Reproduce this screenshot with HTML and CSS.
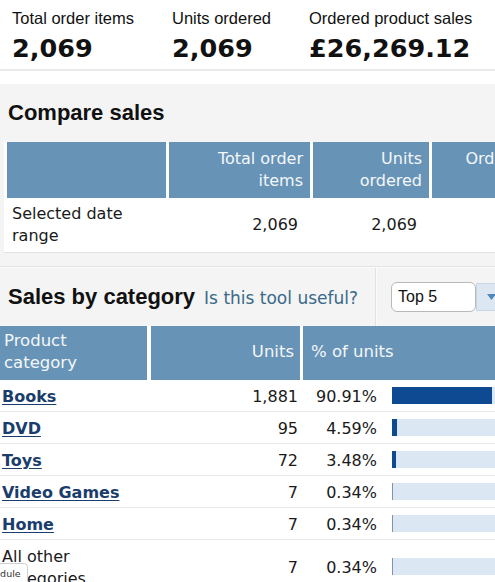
FILE: index.html
```html
<!DOCTYPE html>
<html lang="en">
<head>
    <meta charset="UTF-8">
    <meta name="viewport" content="width=device-width, initial-scale=1.0">
    <title>Sales Dashboard</title>
    <link rel="stylesheet" href="styles.css">
</head>
<body>
    <div class="summary">
        <div class="metric">
            <div class="metric-label">Total order items</div>
            <div class="metric-value">2,069</div>
        </div>
        <div class="metric">
            <div class="metric-label">Units ordered</div>
            <div class="metric-value">2,069</div>
        </div>
        <div class="metric">
            <div class="metric-label">Ordered product sales</div>
            <div class="metric-value">£26,269.12</div>
        </div>
    </div>

    <div class="panel compare">
        <h2 class="panel-title">Compare sales</h2>
        <table class="compare-table">
            <colgroup>
                <col class="c-name">
                <col class="c-items">
                <col class="c-units">
                <col class="c-sales">
            </colgroup>
            <thead>
                <tr>
                    <th></th>
                    <th>Total order items</th>
                    <th>Units ordered</th>
                    <th class="nowrap">Ordered product sales</th>
                </tr>
            </thead>
            <tbody>
                <tr>
                    <td class="row-name">Selected date range</td>
                    <td class="num">2,069</td>
                    <td class="num">2,069</td>
                    <td class="num">£26,269.12</td>
                </tr>
            </tbody>
        </table>
    </div>

    <div class="panel category">
        <div class="cat-head">
            <div class="cat-title">
                <h2 class="panel-title">Sales by category</h2>
                <a class="feedback" href="#">Is this tool useful?</a>
            </div>
            <div class="cat-tools">
                <div class="select-box">Top 5</div>
                <div class="select-btn">
                    <svg width="9" height="6" viewBox="0 0 9 6"><path d="M0 0h9L4.5 6z" fill="#4f87bd"/></svg>
                </div>
            </div>
        </div>
        <table class="cat-table">
            <colgroup>
                <col class="k-name">
                <col class="k-units">
                <col class="k-pct">
                <col class="k-bar">
            </colgroup>
            <thead>
                <tr>
                    <th class="left">Product category</th>
                    <th>Units</th>
                    <th class="left" colspan="2">% of units</th>
                </tr>
            </thead>
            <tbody id="cat-body">
            </tbody>
        </table>
    </div>

    <div class="schedule-tab">Schedule</div>

    <script>
        const categories = [
            { name: 'Books', units: '1,881', pct: 90.91, link: true },
            { name: 'DVD', units: '95', pct: 4.59, link: true },
            { name: 'Toys', units: '72', pct: 3.48, link: true },
            { name: 'Video Games', units: '7', pct: 0.34, link: true },
            { name: 'Home', units: '7', pct: 0.34, link: true },
            { name: 'All other categories', units: '7', pct: 0.34, link: false }
        ];

        const catBody = document.getElementById('cat-body');

        categories.forEach((cat) => {
            const row = document.createElement('tr');
            const fill = Math.max(1, Math.round(cat.pct * 1.1));
            const thin = cat.pct < 1 ? ' thin' : '';
            const name = cat.link
                ? `<a class="cat-link" href="#">${cat.name}</a>`
                : cat.name;
            row.innerHTML = `
                <td class="cat-name">${name}</td>
                <td class="num">${cat.units}</td>
                <td class="num pct">${cat.pct.toFixed(2)}%</td>
                <td class="bar-cell">
                    <div class="bar-track">
                        <div class="bar-fill${thin}" style="width: ${fill}px"></div>
                    </div>
                </td>
            `;
            catBody.appendChild(row);
        });
    </script>
</body>
</html>
```

FILE: styles.css
```css
body {
    margin: 0;
    padding: 0;
    background-color: #fff;
    font-family: "DejaVu Sans", Verdana, sans-serif;
    font-size: 16px;
    color: #1a1a1a;
    overflow: hidden;
}
.summary {
    display: flex;
    gap: 38px;
    height: 61px;
    padding: 8px 12px 0;
    border-bottom: 2px solid #ebebeb;
}
.metric-label {
    font-family: "Liberation Sans", Arial, sans-serif;
    font-size: 16.5px;
    line-height: 20px;
    color: #111;
}
.metric-value {
    margin-top: 5px;
    font-size: 25.5px;
    font-weight: bold;
    line-height: 30px;
    color: #111;
}
.panel {
    background-color: #f4f4f4;
    overflow: hidden;
}
.compare {
    margin-top: 13px;
    padding: 16px 0 13px;
    border-bottom: 1px solid #e3e3e3;
}
.panel-title {
    margin: 0 0 16px 8px;
    font-family: "Liberation Sans", Arial, sans-serif;
    font-size: 22px;
    line-height: 26px;
    font-weight: bold;
    color: #111;
}
table {
    table-layout: fixed;
    background: #fff;
}
.compare-table {
    width: 649px;
    margin-left: 4px;
    border-collapse: separate;
    border-spacing: 3px 0;
    border-bottom: 1px solid #e2e2e2;
}
.c-name { width: 159px; }
.c-items { width: 141px; }
.c-units { width: 116px; }
.c-sales { width: 218px; }
th {
    background-color: #6793b6;
    color: #f4f7fa;
    font-weight: normal;
    text-align: right;
    vertical-align: top;
    line-height: 22px;
}
.compare-table th {
    padding: 6px 7px;
}
.compare-table td {
    padding: 5px 12px 5px 5px;
    line-height: 22px;
}
.nowrap {
    white-space: nowrap;
}
.num {
    text-align: right;
    vertical-align: middle;
    white-space: nowrap;
}
.category {
    border-top: 1px solid #fbfbfb;
}
.cat-head {
    display: flex;
    height: 58px;
}
.cat-title {
    flex: 0 0 367px;
    display: flex;
    align-items: baseline;
    gap: 9px;
    padding-left: 8px;
    padding-top: 16px;
}
.cat-title .panel-title {
    margin: 0;
}
.feedback {
    font-size: 17px;
    color: #3a6a88;
    text-decoration: none;
}
.cat-tools {
    display: flex;
    align-items: center;
    padding-left: 15px;
    border-left: 1px solid #e2e2e2;
    box-shadow: inset 1px 0 0 #fafafa;
}
.select-box {
    box-sizing: border-box;
    width: 85px;
    height: 30px;
    padding: 4px 6px;
    background: #fff;
    border: 1px solid #b9b9b9;
    border-radius: 6px;
    font-family: "Liberation Sans", Arial, sans-serif;
    font-size: 16px;
    line-height: 20px;
    color: #111;
}
.select-btn {
    box-sizing: border-box;
    width: 40px;
    height: 28px;
    padding: 10px 0 0 10px;
    background: #dce7f2;
    border: 1px solid #c5d5e4;
    border-radius: 0 4px 4px 0;
}
.select-btn svg {
    display: block;
}
.cat-table {
    width: 505px;
    border-collapse: separate;
    border-spacing: 0;
}
.k-name { width: 151px; }
.k-units { width: 152px; }
.k-pct { width: 82px; }
.k-bar { width: 120px; }
.cat-table th {
    font-size: 16.5px;
    padding: 4px 6px 6px 4px;
    border-right: 3px solid #fff;
    vertical-align: middle;
}
.cat-table th:first-child {
    border-right-width: 4px;
    padding-left: 4px;
}
.cat-table th.left {
    text-align: left;
}
.cat-table th[colspan] {
    padding-left: 8px;
    border-right: none;
}
.cat-table td {
    padding: 6px 5px 3px 2px;
    line-height: 22px;
    border-bottom: 1px solid #e8e8e8;
    vertical-align: middle;
}
.cat-table td.pct {
    padding-right: 8px;
}
.cat-table td.bar-cell {
    padding-left: 7px;
    padding-right: 0;
}
.cat-link {
    font-weight: bold;
    color: #1a3d6c;
    text-decoration: underline;
    text-underline-offset: 2px;
}
.bar-track {
    width: 110px;
    height: 17px;
    margin-top: -4px;
    background-color: #dce7f4;
}
.bar-fill {
    height: 100%;
    background-color: #0d4a92;
}
.bar-fill.thin {
    background-color: #7f93ad;
}
.schedule-tab {
    position: fixed;
    left: -26px;
    top: 563px;
    padding: 3px 6px 4px 2px;
    background: #fff;
    border: 1px solid #cfcfcf;
    border-radius: 0 4px 0 0;
    font-size: 9.5px;
    line-height: 14px;
    color: #333;
}
```
